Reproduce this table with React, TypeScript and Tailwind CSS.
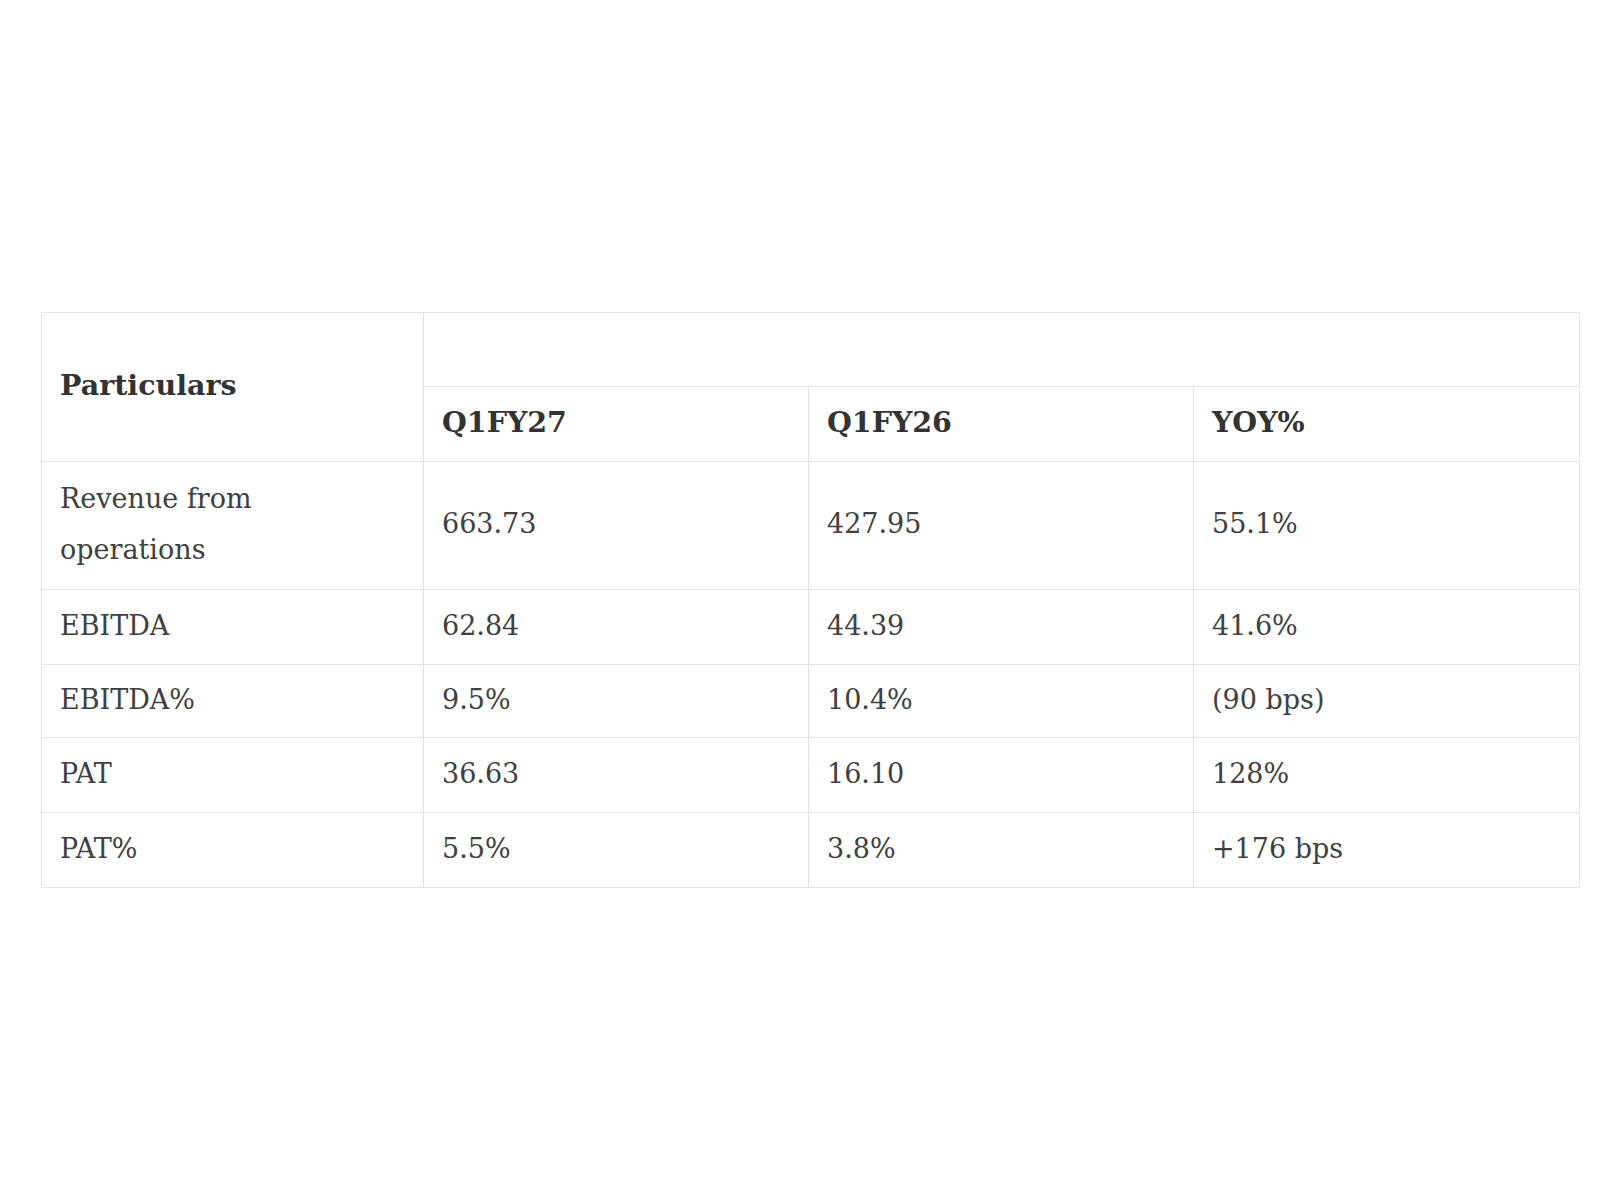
import React from "react";

const rows: { label: React.ReactNode; h: string; a: string; b: string; c: string }[] = [
  { label: <>Revenue from<br />operations</>, h: "h-[128px]", a: "663.73", b: "427.95", c: "55.1%" },
  { label: "EBITDA", h: "h-[75px]", a: "62.84", b: "44.39", c: "41.6%" },
  { label: "EBITDA%", h: "h-[73px]", a: "9.5%", b: "10.4%", c: "(90 bps)" },
  { label: "PAT", h: "h-[75px]", a: "36.63", b: "16.10", c: "128%" },
  { label: "PAT%", h: "h-[75px]", a: "5.5%", b: "3.8%", c: "+176 bps" },
];

const cell = "border border-[#e3e3e3] pl-[18px] pr-[18px] pt-0 pb-[4px] align-middle";
const head = `${cell} text-left font-bold text-[#333] text-[28.5px]`;

export default function App() {
  return (
    <div className="w-[1600px] h-[1200px] bg-white pt-[312px] pl-[41px] text-[#404040] [font-family:'DejaVu_Serif',Georgia,serif] text-[27px] leading-[51px]">
      <table className="border-collapse table-fixed w-[1538px]">
        <colgroup>
          <col className="w-[382px]" />
          <col className="w-[385px]" />
          <col className="w-[385px]" />
          <col className="w-[386px]" />
        </colgroup>
        <thead>
          <tr className="h-[74px]">
            <th rowSpan={2} className={head}>Particulars</th>
            <th colSpan={3} className={cell}></th>
          </tr>
          <tr className="h-[75px]">
            <th className={head}>Q1FY27</th>
            <th className={head}>Q1FY26</th>
            <th className={head}>YOY%</th>
          </tr>
        </thead>
        <tbody>
          {rows.map((r, i) => (
            <tr key={i} className={r.h}>
              <td className={cell}>{r.label}</td>
              <td className={cell}>{r.a}</td>
              <td className={cell}>{r.b}</td>
              <td className={cell}>{r.c}</td>
            </tr>
          ))}
        </tbody>
      </table>
    </div>
  );
}
